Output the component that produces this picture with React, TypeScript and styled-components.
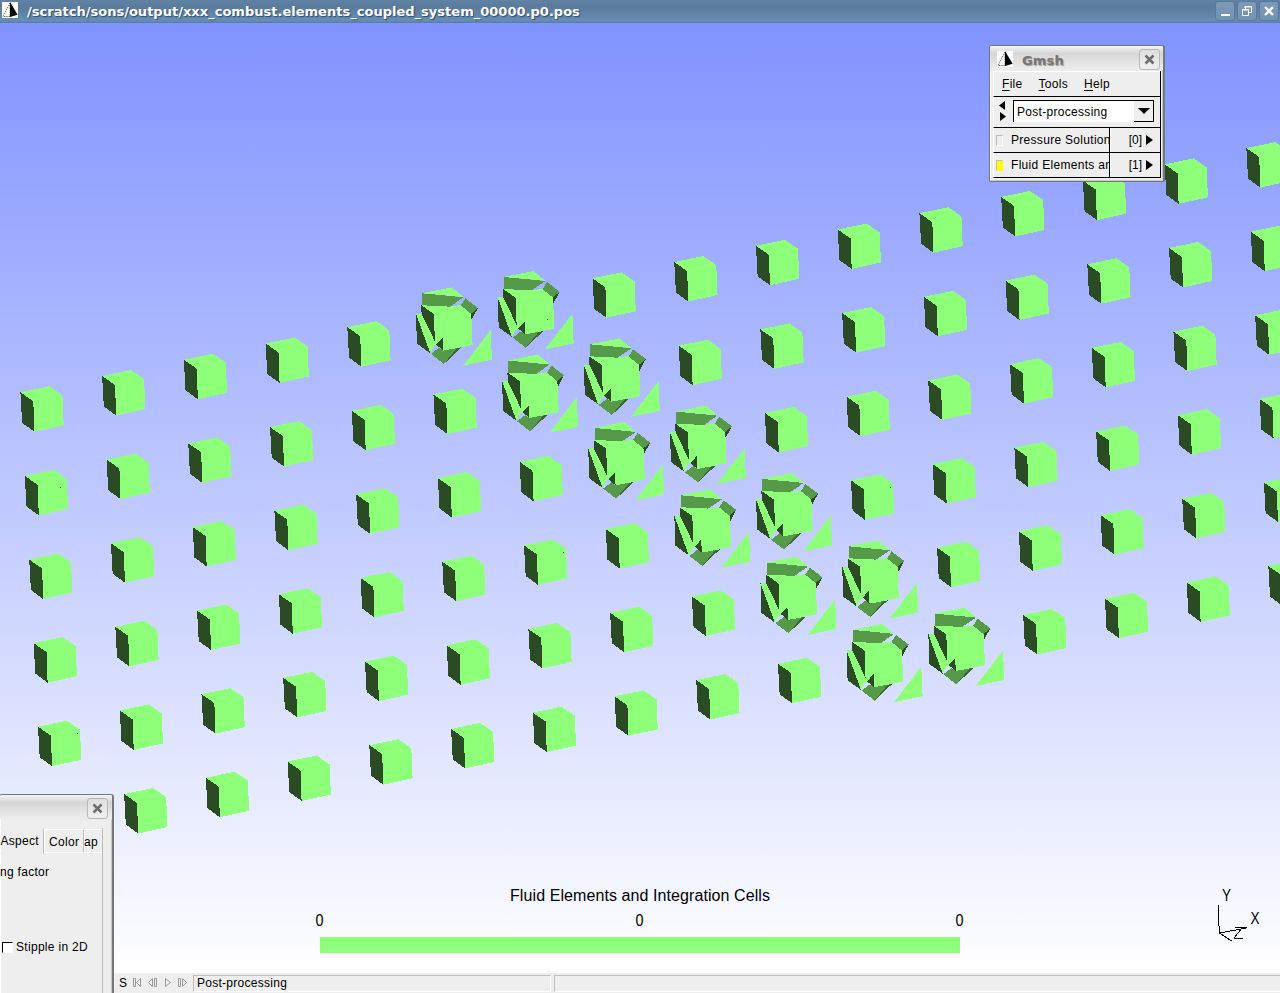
import React from "react";
import styled, { createGlobalStyle } from "styled-components";

const GlobalStyle = createGlobalStyle`
  * { box-sizing: border-box; }
  body { margin: 0; overflow: hidden; }
`;

const Desktop = styled.div`
  position: relative;
  width: 1280px;
  height: 993px;
  display: flex;
  flex-direction: column;
  overflow: hidden;
  font: 12px/14px "Liberation Sans", Arial, sans-serif;
  color: #000;
`;

const TitleBar = styled.header`
  height: 23px;
  flex: none;
  display: flex;
  align-items: flex-start;
  padding: 1px 1px 0 2px;
  background: linear-gradient(#5f82a5, #5a7b9c 30%, #688eb4 92%, #5a7ea4 96%);
`;

const TitleText = styled.h1`
  flex: 1;
  margin: 3px 0 0 9px;
  font: bold 13px/15px "DejaVu Sans", sans-serif;
  letter-spacing: 0.015px;
  white-space: nowrap;
  color: #fff;
  text-shadow: 1px 1px 1px #2f4a66;
`;

const FrameButtons = styled.div`
  display: flex;
  gap: 2px;
`;

const FrameButton = styled.button`
  width: 20px;
  height: 20px;
  padding: 0;
  border: 1px solid #55789b;
  border-radius: 3px;
  background: linear-gradient(#7c9ab7, #7393b3);
  display: grid;
  place-items: center;
`;

const Viewport = styled.main`
  height: 950px;
  flex: none;
  background: linear-gradient(#8093ff, #fff);
  svg { display: block; }
`;

const StatusBar = styled.footer`
  height: 20px;
  flex: none;
  display: flex;
  align-items: flex-start;
  background: #eee;
  padding: 2px 0 0 119px;
`;

const StatusLetter = styled.span`
  width: 13px;
  flex: none;
  margin-top: 1px;
`;

const PlayIcons = styled.svg`
  margin: 3px 4px 0 0;
  flex: none;
`;

const StatusField = styled.div<{ $width: number }>`
  width: ${(p) => p.$width}px;
  height: 17px;
  flex: none;
  margin-right: 3px;
  padding: 0 3px;
  border: 1px solid;
  border-color: #bdbdbd #fff #fff #bdbdbd;
  letter-spacing: 0.27px;
`;

const ToolWindow = styled.section<{ $x: number; $y: number; $w: number; $h: number }>`
  position: absolute;
  left: ${(p) => p.$x}px;
  top: ${(p) => p.$y}px;
  width: ${(p) => p.$w}px;
  height: ${(p) => p.$h}px;
  border: 1px solid #777;
  border-right-width: 2px;
  border-radius: 3px 3px 2px 2px;
  background: #eee;
  box-shadow: inset 1px 1px #fff, inset -1px -1px #c8c8c8;
  display: flex;
  flex-direction: column;
`;

const ToolTitle = styled.div<{ $pad: number }>`
  height: 25px;
  flex: none;
  display: flex;
  justify-content: space-between;
  align-items: flex-start;
  padding: 3px ${(p) => p.$pad}px 0 7px;
  background: linear-gradient(#f4f4f4, #d6d6d6 30%, #ececec 90%);
  border-radius: 2px;
`;

const ToolLogo = styled.span`
  height: 16px;
  margin-top: 2px;
  svg { display: block; }
`;

const ToolName = styled.h2`
  flex: 1;
  margin: 4px 0 0 9px;
  font: bold 13px/15px "DejaVu Sans", sans-serif;
  letter-spacing: 0.2px;
  color: #777;
  text-shadow: 1px 1px 1px #999;
`;

const CloseButton = styled.button`
  width: 21px;
  height: 21px;
  padding: 0;
  border: 1px solid #b8b8b8;
  border-radius: 3px;
  background: linear-gradient(#dedede, #f0f0f0);
  display: grid;
  place-items: center;
`;

const GmshBody = styled.div`
  width: 168px;
  margin-left: 3px;
  display: flex;
  flex-direction: column;
  border-right: 1px solid #000;
  letter-spacing: 0.3px;
`;

const Menu = styled.nav`
  height: 26px;
  display: flex;
  gap: 16px;
  padding: 5px 0 0 8px;
  border-top: 1px solid #fff;
  border-left: 1px solid #fff;
  border-bottom: 1px solid #000;
  u { text-underline-offset: 2px; }
`;

const ModuleRow = styled.div`
  height: 31px;
  display: flex;
  align-items: flex-start;
  padding: 3px 6px 0 5px;
  gap: 7px;
  border-left: 1px solid #fff;
  border-bottom: 1px solid #000;
`;

const Combo = styled.div`
  width: 141px;
  height: 22px;
  display: flex;
  justify-content: space-between;
  padding: 4px 0 0 3px;
  background: #fff;
  border-top: 1px solid #000;
  border-left: 1px solid #000;
`;

const ComboButton = styled.div`
  width: 20px;
  height: 21px;
  margin-top: -4px;
  border-right: 1px solid #000;
  border-bottom: 1px solid #000;
  background: #eee;
  display: grid;
  place-items: center;
`;

const ViewRow = styled.div`
  height: 25px;
  display: flex;
  border-bottom: 1px solid #000;
  border-left: 1px solid #fff;
`;

const ViewName = styled.div`
  width: 116px;
  flex: none;
  display: flex;
  align-items: center;
  gap: 8px;
  padding-left: 2px;
  white-space: nowrap;
  overflow: hidden;
  border-right: 1px solid #000;
`;

const ViewLight = styled.span<{ $on: boolean }>`
  width: 7px;
  height: 11px;
  flex: none;
  border: 1px solid;
  border-color: #bbb #fff #fff #bbb;
  border-color: ${(p) => (p.$on ? "#bbb #ff0 #ff0 #bbb" : "#bbb #fff #fff #bbb")};
  background: ${(p) => (p.$on ? "#ff0" : "#eee")};
`;

const ViewNumber = styled.div`
  flex: 1;
  display: flex;
  align-items: center;
  justify-content: flex-end;
  gap: 4px;
  padding-right: 7px;
  border-left: 1px solid #fff;
  letter-spacing: 0;
`;

const OptionsBody = styled.div`
  width: 103px;
  flex: 1;
  margin-top: 8px;
  border-right: 1px solid #bbb;
  letter-spacing: 0.3px;
`;

const Tabs = styled.div`
  height: 26px;
  display: flex;
  align-items: flex-start;
`;

const Tab = styled.div<{ $width: number; $active?: boolean }>`
  width: ${(p) => p.$width}px;
  height: ${(p) => (p.$active ? 26 : 24)}px;
  margin-top: ${(p) => (p.$active ? 0 : 1)}px;
  padding: 5px 0 0 ${(p) => (p.$active ? 0.5 : p.$width > 30 ? 5 : 0)}px;
  border-right: 1px solid #bbb;
  border-top: 1px solid ${(p) => (p.$active ? "#eee" : "#fff")};
  border-bottom: 1px solid ${(p) => (p.$active ? "#eee" : "#fff")};
  box-shadow: ${(p) => (p.$active ? "none" : "inset 1px 0 #fff")};
  white-space: nowrap;
  &:last-child { border-right: 0; }
`;

const OptionLabel = styled.div`
  margin-top: 11px;
`;

const CheckRow = styled.label`
  display: flex;
  gap: 3px;
  align-items: center;
  margin: 61px 0 0 2px;
  white-space: nowrap;
`;

const CheckBox = styled.span`
  width: 11px;
  height: 11px;
  background: #fff;
  border: 1px solid;
  border-color: #000 #fff #fff #000;
`;

const LIGHT = "#8eff79";
const MID = "#569a49";
const DARK = "#2a4b23";

const Cube = ({ x, y }: { x: number; y: number }) => (
  <g transform={`translate(${x} ${y})`}>
    <polygon fill={LIGHT} points="0,0 29,-6 42,3 43.3,33 14,39.5 1.7,30.5" />
    <polygon fill={DARK} points="0,0 12.9,9 14,39.5 1.7,30.5" />
  </g>
);

/* Cut cell, split into integration cells; its coordinates are in thirds of a pixel. */
const CutCell = ({ x, y }: { x: number; y: number }) => (
  <g transform={`translate(${x} ${y}) scale(0.33333) translate(-87.3 -151.8)`}>
    <polygon fill={LIGHT} points="66,99 155,81 191,110" />
    <polygon fill={MID} points="67,99 191,111 150,139 67,135" />
    <polygon fill={MID} points="196,114 234,143 215,161 179,141" />
    <polygon fill={DARK} points="234,143 215,178 213,161" />
    <polygon fill={MID} points="93,281 118,262 130,271 185,261 132,311" />
    <polygon fill="#366b2d" points="171,264 185,261 132,311" />
    <polygon fill={LIGHT} points="64,135 150,139 181,134 214,161 218,254 130,271 128,233 104,260 101,161" />
    <polygon fill={DARK} points="64,135 102,161 105,249 65,163" />
    <polygon fill={DARK} points="129,232 109,253 130,271" />
    <polygon fill={LIGHT} points="48,160 65,160 107,248 91,279" />
    <polygon fill={DARK} points="48,160 51,250 91,279" />
    <polygon fill={LIGHT} points="272,209 276,298 190,316" />
  </g>
);

const cells = Array.from({ length: 6 }, (_, row) =>
  Array.from({ length: 16 }, (_, col) => ({
    row,
    col,
    x: 20.4 + col * 81.73 + row * 4.4,
    y: 369.3 + -16.28 * col + row * 83.6,
    cut: col === row + 5 || col === row + 6,
  })),
).flat();

const specks = [[60, 464], [547, 296], [77, 710], [890, 464], [563, 529]];

const GmshLogo = () => (
  <svg width="16" height="16" viewBox="0 0 16 16">
    <rect width="16" height="16" fill="#fff" />
    <path d="M8 1 1 14.500h7z" fill="#fff" stroke="#000" strokeWidth=".6" strokeDasharray="1.5 .8" />
    <path d="M8 0v15l7.600-2.200z" fill="#000" />
  </svg>
);

const CloseIcon = () => (
  <svg width="11" height="11" viewBox="0 0 11 11">
    <path d="m1.500 1.500 8 8m0-8-8 8" stroke="#6d6d6d" strokeWidth="2.5" />
  </svg>
);

const Triangle = ({ d, w, h }: { d: string; w: number; h: number }) => (
  <svg width={w} height={h}>
    <path d={d} />
  </svg>
);

const Scene = () => (
  <svg width="1280" height="950" fontFamily="'Liberation Sans', Arial, sans-serif">
    <g shapeRendering="crispEdges">
      {cells.map((c) =>
        c.cut ? (
          <CutCell key={`${c.row}-${c.col}`} x={c.x} y={c.y} />
        ) : (
          <Cube key={`${c.row}-${c.col}`} x={c.x} y={c.y} />
        ),
      )}
      {specks.map(([x, y]) => (
        <rect key={`${x}-${y}`} x={x} y={y} width="1" height="1" fill={DARK} />
      ))}
      <rect x="320" y="914" width="640" height="16" fill={LIGHT} />
      <path d="M1218.500 882v13l1 15M1219.500 910l27-5M1219.500 910l12 8M1235 904.500h12M1234 915.500h9M1242 905l-8 10" fill="none" stroke="#000" />
    </g>
    <g fontSize="16" textAnchor="middle">
      <text x="640" y="878" textLength="260">Fluid Elements and Integration Cells</text>
      <text x="319.5" y="903" textLength="8" lengthAdjust="spacingAndGlyphs">0</text>
      <text x="639.5" y="903" textLength="8" lengthAdjust="spacingAndGlyphs">0</text>
      <text x="959.5" y="903" textLength="8" lengthAdjust="spacingAndGlyphs">0</text>
      <text x="1226.5" y="878" textLength="9" lengthAdjust="spacingAndGlyphs">Y</text>
      <text x="1255" y="901" textLength="9" lengthAdjust="spacingAndGlyphs">X</text>
    </g>
  </svg>
);

export default function App() {
  return (
    <Desktop>
      <GlobalStyle />
      <TitleBar>
        <ToolLogo style={{ marginTop: 1 }}><GmshLogo /></ToolLogo>
        <TitleText>/scratch/sons/output/xxx_combust.elements_coupled_system_00000.p0.pos</TitleText>
        <FrameButtons>
          <FrameButton>
            <svg width="12" height="12"><path d="M2 9h9v2H2z" fill="#fff" /></svg>
          </FrameButton>
          <FrameButton>
            <svg width="12" height="12" fill="none" stroke="#fff">
              <path d="M4.500 4V1.500h6v6H8M3 2h8" />
              <path d="M1.500 4.500h6v6h-6zM1 5h7" />
            </svg>
          </FrameButton>
          <FrameButton>
            <svg width="12" height="12"><path d="m2 2 8 8m0-8-8 8" stroke="#fff" strokeWidth="2.3" /></svg>
          </FrameButton>
        </FrameButtons>
      </TitleBar>
      <Viewport>
        <Scene />
      </Viewport>
      <StatusBar>
        <StatusLetter>S</StatusLetter>
        <PlayIcons width="57" height="10" fill="none" stroke="#999">
          <path d="M1.500.5h2v8h-2zM8.500.5v8l-4-4zM20.500.5v8l-4-4zM22.500.5h2v8h-2zM33.500.5v8l5-4zM46.500.5h2v8h-2zM50.500.5v8l4-4z" />
        </PlayIcons>
        <StatusField $width={358}>Post-processing</StatusField>
        <StatusField $width={740} />
      </StatusBar>

      <ToolWindow $x={989} $y={45} $w={176} $h={137}>
        <ToolTitle $pad={3}>
          <ToolLogo><GmshLogo /></ToolLogo>
          <ToolName>Gmsh</ToolName>
          <CloseButton><CloseIcon /></CloseButton>
        </ToolTitle>
        <GmshBody>
          <Menu>
            <span><u>F</u>ile</span>
            <span><u>T</u>ools</span>
            <span><u>H</u>elp</span>
          </Menu>
          <ModuleRow>
            <svg width="7" height="22"><path d="M6 1v9L0 5.500zM1 12v9l6-4.500z" /></svg>
            <Combo>
              Post-processing
              <ComboButton><Triangle w={12} h={6} d="M0 0h12L6 6z" /></ComboButton>
            </Combo>
          </ModuleRow>
          <ViewRow>
            <ViewName><ViewLight $on={false} />Pressure Solution</ViewName>
            <ViewNumber>[0]<Triangle w={7} h={10} d="M0 0v10l7-5z" /></ViewNumber>
          </ViewRow>
          <ViewRow>
            <ViewName><ViewLight $on />Fluid Elements an</ViewName>
            <ViewNumber>[1]<Triangle w={7} h={10} d="M0 0v10l7-5z" /></ViewNumber>
          </ViewRow>
        </GmshBody>
      </ToolWindow>

      <ToolWindow $x={-1} $y={794} $w={115} $h={210}>
        <ToolTitle $pad={4}>
          <span />
          <CloseButton><CloseIcon /></CloseButton>
        </ToolTitle>
        <OptionsBody>
          <Tabs>
            <Tab $width={44} $active>Aspect</Tab>
            <Tab $width={40}>Color</Tab>
            <Tab $width={18}>ap</Tab>
          </Tabs>
          <OptionLabel>ng factor</OptionLabel>
          <CheckRow><CheckBox />Stipple in 2D</CheckRow>
        </OptionsBody>
      </ToolWindow>
    </Desktop>
  );
}
